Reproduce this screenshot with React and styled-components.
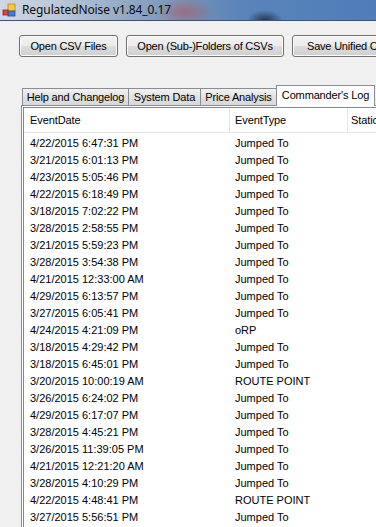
import React from "react";
import styled, { createGlobalStyle } from "styled-components";

const Global = createGlobalStyle`
  html, body { margin: 0; padding: 0; background: #f0f0f0; }
  body { font-family: "Liberation Sans", Arial, sans-serif; font-size: 11px; color: #000; }
`;

const Window = styled.div`
  width: 376px;
  height: 527px;
  overflow: hidden;
  background: #f0f0f0;
  display: flex;
  flex-direction: column;
`;

const TitleBar = styled.div`
  height: 20px;
  flex: none;
  display: flex;
  align-items: center;
  gap: 6px;
  padding-left: 2px;
  border-bottom: 1px solid #3e5470;
  background:
    radial-gradient(ellipse 18px 10px at 265px 20px, rgba(20,30,50,0.75), rgba(20,30,50,0) 100%),
    radial-gradient(ellipse 30px 14px at 185px 12px, rgba(170,90,100,0.65), rgba(170,90,100,0) 100%),
    linear-gradient(90deg, #cfd8e2 0px, #b9c7d6 60px, #8aa3c0 140px, #6e8fb7 200px, #5a84ba 240px, #4f7db8 376px);
`;

const TitleText = styled.span`
  font-family: "Noto Sans", "Open Sans", sans-serif;
  font-size: 12px;
  letter-spacing: -0.1px;
  color: #0c0c0c;
  line-height: 20px;
`;

const Toolbar = styled.div`
  display: flex;
  gap: 8px;
  padding: 14px 0 0 19px;
  flex: none;
`;

const Button = styled.button`
  flex: none;
  width: ${(p) => p.$w}px;
  height: 22px;
  padding: 0;
  font-family: "Liberation Sans", Arial, sans-serif;
  font-size: 11px;
  letter-spacing: -0.2px;
  color: #000;
  white-space: nowrap;
  overflow: hidden;
  border: 1px solid #707070;
  border-radius: 3px;
  background: linear-gradient(#f2f2f2 0%, #ebebeb 50%, #dddddd 51%, #cfcfcf 100%);
  box-shadow: inset 0 0 0 1px #fcfcfc;
  text-align: ${(p) => (p.$clip ? "left" : "center")};
  padding-left: ${(p) => (p.$clip ? "14px" : "0")};
`;

const TabArea = styled.div`
  margin-top: 28px;
  margin-left: 21px;
  display: flex;
  flex-direction: column;
  flex: 1;
  min-height: 0;
`;

const TabStrip = styled.div`
  display: flex;
  align-items: flex-end;
  height: 21px;
  padding-left: 1px;
  position: relative;
  z-index: 1;
`;

const Tab = styled.div`
  flex: none;
  width: ${(p) => p.$w}px;
  height: ${(p) => (p.$active ? 21 : 18)}px;
  box-sizing: border-box;
  border: 1px solid #898c95;
  border-bottom: ${(p) => (p.$active ? "none" : "1px solid #898c95")};
  border-left: ${(p) => (p.$first || p.$active ? "1px solid #898c95" : "none")};
  margin-left: ${(p) => (p.$active ? "-1px" : "0")};
  background: ${(p) => (p.$active ? "#ffffff" : "linear-gradient(#f2f2f2, #e1e1e1 50%, #d8d8d8)")};
  display: flex;
  align-items: center;
  justify-content: center;
  padding-bottom: ${(p) => (p.$active ? "3px" : "0")};
  white-space: nowrap;
  letter-spacing: -0.15px;
`;

const TabPage = styled.div`
  flex: 1;
  min-height: 0;
  margin-top: -1px;
  border-top: 1px solid #898c95;
  border-left: 1px solid #898c95;
  background: #ffffff;
  padding: 1px 0 0 1px;
  display: flex;
`;

const ListView = styled.div`
  flex: 1;
  border-top: 1px solid #828790;
  border-left: 1px solid #828790;
  background: #ffffff;
  display: flex;
  flex-direction: column;
  overflow: hidden;
`;

const HeaderRow = styled.div`
  display: flex;
  height: 24px;
  flex: none;
  border-bottom: 1px solid #e5e5e5;
  background: #ffffff;
`;

const HeaderCell = styled.div`
  flex: none;
  width: ${(p) => p.$w}px;
  box-sizing: border-box;
  padding-left: ${(p) => p.$pad}px;
  display: flex;
  align-items: center;
  border-right: 1px solid #e5e5e5;
  white-space: nowrap;
  overflow: hidden;
  letter-spacing: -0.1px;
`;

const Body = styled.div`
  padding-top: 1px;
  display: flex;
  flex-direction: column;
`;

const Row = styled.div`
  display: flex;
  height: 17px;
  flex: none;
  align-items: center;
`;

const Cell = styled.div`
  flex: none;
  width: ${(p) => p.$w}px;
  box-sizing: border-box;
  padding-left: ${(p) => p.$pad}px;
  white-space: nowrap;
  overflow: hidden;
`;

const AppIcon = () => (
  <svg width="14" height="14" viewBox="0 0 14 14">
    <rect x="6" y="1" width="7" height="7" fill="#f6c83a" stroke="#c08a10" strokeWidth="0.8" />
    <rect x="6" y="8" width="7" height="5" fill="#3d7fd6" stroke="#1f4f9a" strokeWidth="0.8" />
    <rect x="1" y="7" width="5" height="5" fill="#e0453a" stroke="#9a1e18" strokeWidth="0.8" />
  </svg>
);

const rows = [
  ["4/22/2015 6:47:31 PM", "Jumped To"],
  ["3/21/2015 6:01:13 PM", "Jumped To"],
  ["4/23/2015 5:05:46 PM", "Jumped To"],
  ["4/22/2015 6:18:49 PM", "Jumped To"],
  ["3/18/2015 7:02:22 PM", "Jumped To"],
  ["3/28/2015 2:58:55 PM", "Jumped To"],
  ["3/21/2015 5:59:23 PM", "Jumped To"],
  ["3/28/2015 3:54:38 PM", "Jumped To"],
  ["4/21/2015 12:33:00 AM", "Jumped To"],
  ["4/29/2015 6:13:57 PM", "Jumped To"],
  ["3/27/2015 6:05:41 PM", "Jumped To"],
  ["4/24/2015 4:21:09 PM", "oRP"],
  ["3/18/2015 4:29:42 PM", "Jumped To"],
  ["3/18/2015 6:45:01 PM", "Jumped To"],
  ["3/20/2015 10:00:19 AM", "ROUTE POINT"],
  ["3/26/2015 6:24:02 PM", "Jumped To"],
  ["4/29/2015 6:17:07 PM", "Jumped To"],
  ["3/28/2015 4:45:21 PM", "Jumped To"],
  ["3/26/2015 11:39:05 PM", "Jumped To"],
  ["4/21/2015 12:21:20 AM", "Jumped To"],
  ["3/28/2015 4:10:29 PM", "Jumped To"],
  ["4/22/2015 4:48:41 PM", "ROUTE POINT"],
  ["3/27/2015 5:56:51 PM", "Jumped To"],
];

export default function App() {
  return (
    <Window>
      <Global />
      <TitleBar>
        <AppIcon />
        <TitleText>RegulatedNoise v1.84_0.17</TitleText>
      </TitleBar>
      <Toolbar>
        <Button $w={99}>Open CSV Files</Button>
        <Button $w={158}>Open (Sub-)Folders of CSVs</Button>
        <Button $w={120} $clip>Save Unified CSV</Button>
      </Toolbar>
      <TabArea>
        <TabStrip>
          <Tab $w={107} $first>Help and Changelog</Tab>
          <Tab $w={72}>System Data</Tab>
          <Tab $w={76}>Price Analysis</Tab>
          <Tab $w={99} $active>Commander's Log</Tab>
        </TabStrip>
        <TabPage>
          <ListView>
            <HeaderRow>
              <HeaderCell $w={206} $pad={6}>EventDate</HeaderCell>
              <HeaderCell $w={118} $pad={5}>EventType</HeaderCell>
              <HeaderCell $w={100} $pad={3}>Station</HeaderCell>
            </HeaderRow>
            <Body>
              {rows.map(([d, t], i) => (
                <Row key={i}>
                  <Cell $w={206} $pad={6}>{d}</Cell>
                  <Cell $w={118} $pad={5}>{t}</Cell>
                  <Cell $w={100} $pad={3}></Cell>
                </Row>
              ))}
            </Body>
          </ListView>
        </TabPage>
      </TabArea>
    </Window>
  );
}
